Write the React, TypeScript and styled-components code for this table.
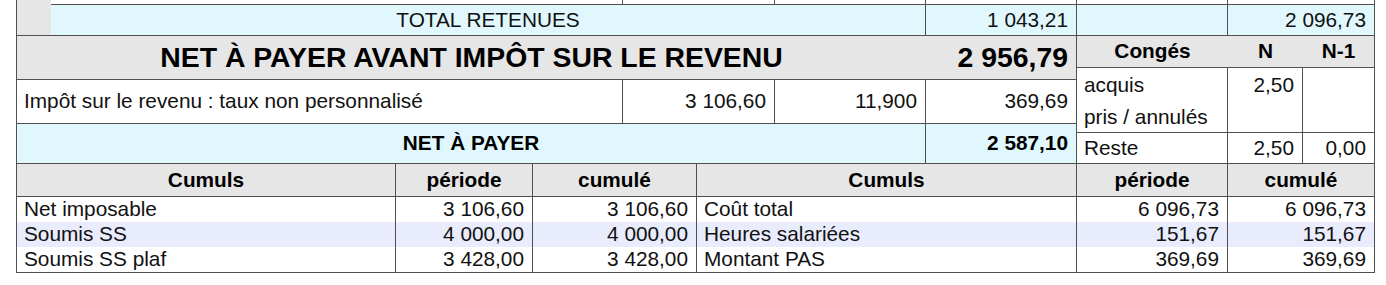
import React from "react";
import styled, { createGlobalStyle } from "styled-components";

const LINE = "#505050";
const GRAY = "#e6e6e6";
const BLUE = "#e0f7fe";
const LAVENDER = "#e8ecfc";

const GlobalStyle = createGlobalStyle`
  html, body { margin: 0; padding: 0; background: #ffffff; }
  body {
    font-family: "Liberation Sans", Arial, Helvetica, sans-serif;
    color: #111111;
  }
`;

const Sheet = styled.div`
  margin-left: 16px;
  width: 1359px;
  box-sizing: border-box;
  border-left: 1px solid ${LINE};
  border-right: 1px solid ${LINE};
  border-bottom: 1px solid ${LINE};
  font-size: 20.8px;
`;

const Section = styled.div<{ $cols: string }>`
  display: grid;
  grid-template-columns: ${(p) => p.$cols};
`;

const Stub = styled.div`
  background: ${GRAY};
  border-bottom: 1px solid ${LINE};
`;

const Stack = styled.div<{ $sep?: boolean }>`
  display: flex;
  flex-direction: column;
  box-sizing: border-box;
  border-right: ${(p) => (p.$sep ? `1px solid ${LINE}` : "none")};
`;

const Row = styled.div<{ $cols: string; $h: number; $bg?: string; $noLine?: boolean }>`
  display: grid;
  grid-template-columns: ${(p) => p.$cols};
  height: ${(p) => p.$h}px;
  box-sizing: border-box;
  background: ${(p) => p.$bg ?? "transparent"};
  border-bottom: ${(p) => (p.$noLine ? "none" : `1px solid ${LINE}`)};
`;

type Align = "left" | "center" | "right";

const justify = (a?: Align) =>
  a === "right" ? "flex-end" : a === "center" ? "center" : "flex-start";

const Cell = styled.div<{ $align?: Align; $sep?: boolean; $bold?: boolean; $big?: boolean }>`
  display: flex;
  align-items: center;
  justify-content: ${(p) => justify(p.$align)};
  padding: 0 ${(p) => (p.$align === "right" ? "8px" : "0")} 0
    ${(p) => (p.$align === "left" || !p.$align ? "7px" : "0")};
  box-sizing: border-box;
  border-right: ${(p) => (p.$sep ? `1px solid ${LINE}` : "none")};
  font-weight: ${(p) => (p.$bold ? 700 : 400)};
  font-size: ${(p) => (p.$big ? "28.4px" : "20.8px")};
  color: ${(p) => (p.$bold ? "#000" : "#111")};
  line-height: 1;
  white-space: nowrap;
  overflow: hidden;
`;

const LinesCell = styled.div<{ $sep?: boolean }>`
  display: flex;
  flex-direction: column;
  padding-top: 1px;
  box-sizing: border-box;
  border-right: ${(p) => (p.$sep ? `1px solid ${LINE}` : "none")};
`;

const Line = styled.div<{ $align?: Align }>`
  height: 32px;
  display: flex;
  align-items: center;
  justify-content: ${(p) => justify(p.$align)};
  padding: 0 ${(p) => (p.$align === "right" ? "8px" : "0")} 0
    ${(p) => (p.$align === "right" ? "0" : "7px")};
  line-height: 1;
  white-space: nowrap;
`;

const TOP_COLS = "572px 152px 151px 151px 151px 146px";
const TOTAL_COLS = "875px 151px 151px 146px";
const NET_COLS = "909px 150px";
const IMPOT_COLS = "606px 152px 151px 150px";
const CONGES_COLS = "151px 75px 71px";
const CUMUL_COLS = "379px 137px 164px 380px 151px 146px";

const cumuls: [string, string, string, string, string, string][] = [
  ["Net imposable", "3 106,60", "3 106,60", "Coût total", "6 096,73", "6 096,73"],
  ["Soumis SS", "4 000,00", "4 000,00", "Heures salariées", "151,67", "151,67"],
  ["Soumis SS plaf", "3 428,00", "3 428,00", "Montant PAS", "369,69", "369,69"],
];

export default function App() {
  return (
    <>
      <GlobalStyle />
      <Sheet>
        <Section $cols="34px 1323px">
          <Stub />
          <Stack>
            <Row $cols={TOP_COLS} $h={5}>
              <Cell $sep />
              <Cell $sep />
              <Cell $sep />
              <Cell $sep />
              <Cell $sep />
              <Cell />
            </Row>
            <Row $cols={TOTAL_COLS} $h={31} $bg={BLUE}>
              <Cell $align="center" $sep>TOTAL RETENUES</Cell>
              <Cell $align="right" $sep>1 043,21</Cell>
              <Cell $sep />
              <Cell $align="right">2 096,73</Cell>
            </Row>
          </Stack>
        </Section>

        <Section $cols="1060px 297px">
          <Stack $sep>
            <Row $cols={NET_COLS} $h={44} $bg={GRAY}>
              <Cell $align="center" $bold $big>NET À PAYER AVANT IMPÔT SUR LE REVENU</Cell>
              <Cell $align="right" $bold $big>2 956,79</Cell>
            </Row>
            <Row $cols={IMPOT_COLS} $h={44}>
              <Cell $align="left" $sep>Impôt sur le revenu : taux non personnalisé</Cell>
              <Cell $align="right" $sep>3 106,60</Cell>
              <Cell $align="right" $sep>11,900</Cell>
              <Cell $align="right">369,69</Cell>
            </Row>
            <Row $cols={NET_COLS} $h={40} $bg={BLUE}>
              <Cell $align="center" $bold $sep>NET À PAYER</Cell>
              <Cell $align="right" $bold>2 587,10</Cell>
            </Row>
          </Stack>
          <Stack>
            <Row $cols={CONGES_COLS} $h={32} $bg={GRAY}>
              <Cell $align="center" $bold>Congés</Cell>
              <Cell $align="center" $bold>N</Cell>
              <Cell $align="center" $bold>N-1</Cell>
            </Row>
            <Row $cols={CONGES_COLS} $h={65}>
              <LinesCell $sep>
                <Line>acquis</Line>
                <Line>pris / annulés</Line>
              </LinesCell>
              <LinesCell $sep>
                <Line $align="right">2,50</Line>
              </LinesCell>
              <LinesCell />
            </Row>
            <Row $cols={CONGES_COLS} $h={31}>
              <Cell $align="left" $sep>Reste</Cell>
              <Cell $align="right" $sep>2,50</Cell>
              <Cell $align="right">0,00</Cell>
            </Row>
          </Stack>
        </Section>

        <Section $cols="1357px">
          <Stack>
            <Row $cols={CUMUL_COLS} $h={33} $bg={GRAY}>
              <Cell $align="center" $bold $sep>Cumuls</Cell>
              <Cell $align="center" $bold $sep>période</Cell>
              <Cell $align="center" $bold $sep>cumulé</Cell>
              <Cell $align="center" $bold $sep>Cumuls</Cell>
              <Cell $align="center" $bold $sep>période</Cell>
              <Cell $align="center" $bold>cumulé</Cell>
            </Row>
            {cumuls.map((r, i) => (
              <Row key={r[0]} $cols={CUMUL_COLS} $h={25} $noLine $bg={i === 1 ? LAVENDER : undefined}>
                <Cell $align="left" $sep>{r[0]}</Cell>
                <Cell $align="right" $sep>{r[1]}</Cell>
                <Cell $align="right" $sep>{r[2]}</Cell>
                <Cell $align="left" $sep>{r[3]}</Cell>
                <Cell $align="right" $sep>{r[4]}</Cell>
                <Cell $align="right">{r[5]}</Cell>
              </Row>
            ))}
          </Stack>
        </Section>
      </Sheet>
    </>
  );
}
